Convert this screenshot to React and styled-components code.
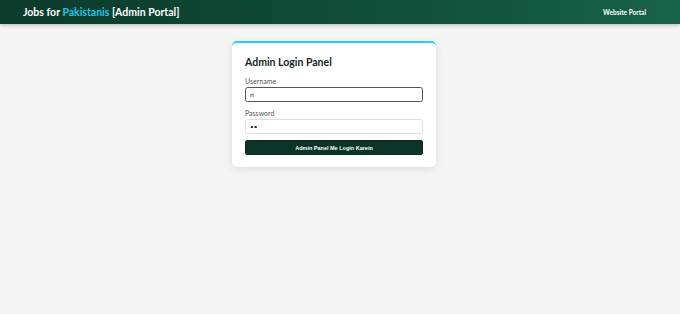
import styled, { createGlobalStyle } from "styled-components";

const GlobalStyle = createGlobalStyle`
  html, body {
    margin: 0;
    padding: 0;
    background: #f4f5f4;
    font-family: Lato, "Noto Sans", sans-serif;
  }
`;

const Page = styled.div`
  min-height: 314px;
  background: #f4f5f4;
`;

const Header = styled.header`
  height: 24px;
  display: flex;
  align-items: center;
  justify-content: space-between;
  padding: 0 34px 0 23px;
  background: linear-gradient(90deg, #0b3a2a 0%, #11503b 60%, #17634a 100%);
  box-shadow: 0 1px 4px rgba(0, 0, 0, 0.25);
`;

const Brand = styled.h1`
  margin: 0;
  font-size: 10.5px;
  font-weight: 700;
  color: #ffffff;
  span {
    color: #1fc7ea;
  }
`;

const NavLink = styled.a`
  font-size: 6.5px;
  font-weight: 700;
  color: #ffffff;
  text-decoration: none;
`;

const Main = styled.main`
  display: flex;
  justify-content: center;
  padding: 17px 12px 0 0;
`;

const Card = styled.section`
  width: 178px;
  padding: 13px 13px 12px;
  background: #ffffff;
  border-top: 2px solid #2bd0f5;
  border-radius: 5px;
  box-shadow: 0 2px 8px rgba(0, 0, 0, 0.1);
`;

const Title = styled.h2`
  margin: 0 0 9px;
  font-size: 10.5px;
  font-weight: 700;
  color: #17261f;
`;

const Field = styled.div`
  display: flex;
  flex-direction: column;
  margin-bottom: ${(p) => (p.$last ? "6px" : "7px")};
`;

const Label = styled.label`
  font-size: 7px;
  color: #555;
  margin-bottom: 2px;
`;

const Input = styled.input`
  box-sizing: border-box;
  height: 15px;
  width: 100%;
  padding: 0 4px;
  font-size: 6.5px;
  font-family: inherit;
  color: #222;
  border-radius: 2.5px;
  border: 1px solid ${(p) => (p.$focused ? "#555" : "#e0e0e0")};
  outline: none;
  background: #fff;
`;

const Button = styled.button`
  display: block;
  width: 100%;
  height: 15px;
  padding: 0;
  border: 1px solid #0d2b22;
  border-radius: 2px;
  background: #0b3327;
  color: #ffffff;
  font-family: "Liberation Sans", Arial, sans-serif;
  font-size: 5.5px;
  font-weight: 700;
  cursor: pointer;
`;

export default function App() {
  return (
    <Page>
      <GlobalStyle />
      <Header>
        <Brand>
          Jobs for <span>Pakistanis</span> [Admin Portal]
        </Brand>
        <NavLink href="#">Website Portal</NavLink>
      </Header>
      <Main>
        <Card>
          <Title>Admin Login Panel</Title>
          <Field>
            <Label>Username</Label>
            <Input $focused defaultValue="ri" />
          </Field>
          <Field $last>
            <Label>Password</Label>
            <Input type="password" defaultValue="aa" />
          </Field>
          <Button>Admin Panel Me Login Karein</Button>
        </Card>
      </Main>
    </Page>
  );
}
